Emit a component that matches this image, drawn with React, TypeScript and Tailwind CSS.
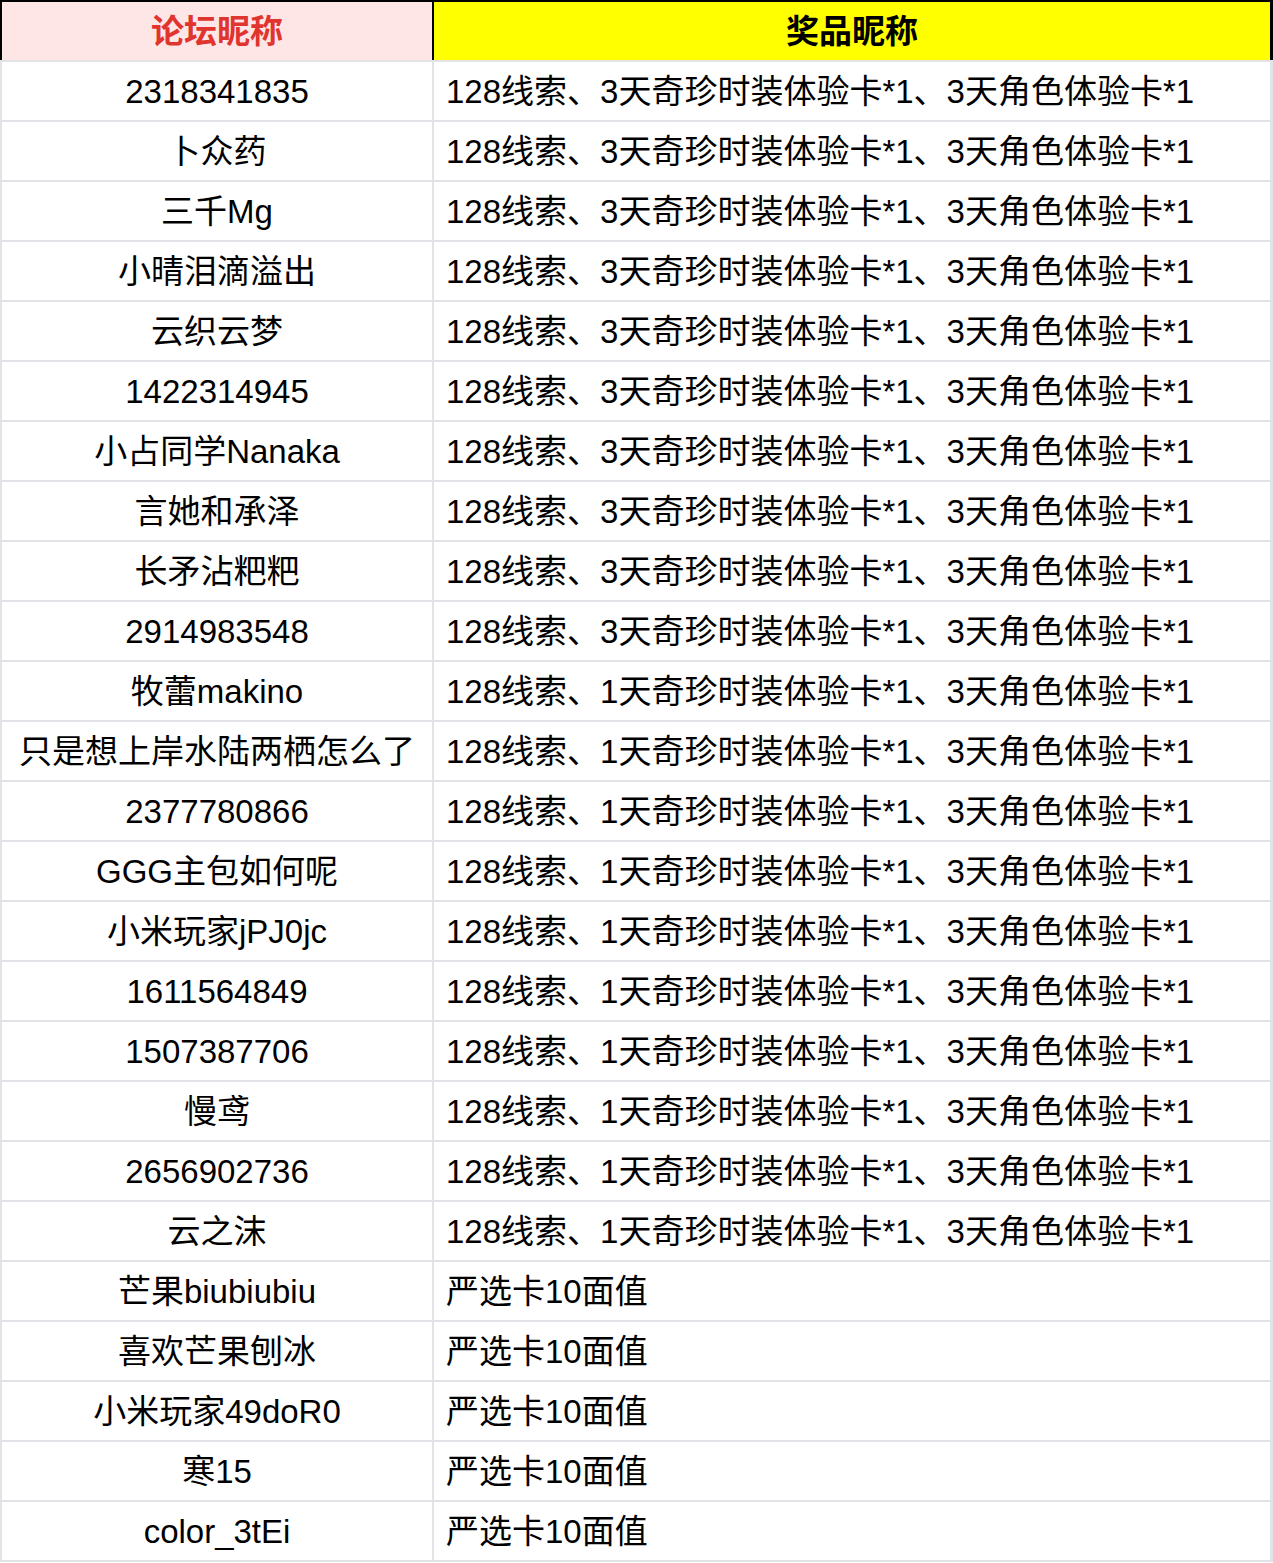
const FULL3 = "128线索、3天奇珍时装体验卡*1、3天角色体验卡*1";
const FULL1 = "128线索、1天奇珍时装体验卡*1、3天角色体验卡*1";
const CARD = "严选卡10面值";

const rows: [string, string][] = [
  ["2318341835", FULL3],
  ["卜众药", FULL3],
  ["三千Mg", FULL3],
  ["小晴泪滴溢出", FULL3],
  ["云织云梦", FULL3],
  ["1422314945", FULL3],
  ["小占同学Nanaka", FULL3],
  ["言她和承泽", FULL3],
  ["长矛沾粑粑", FULL3],
  ["2914983548", FULL3],
  ["牧蕾makino", FULL1],
  ["只是想上岸水陆两栖怎么了", FULL1],
  ["2377780866", FULL1],
  ["GGG主包如何呢", FULL1],
  ["小米玩家jPJ0jc", FULL1],
  ["1611564849", FULL1],
  ["1507387706", FULL1],
  ["慢鸢", FULL1],
  ["2656902736", FULL1],
  ["云之沫", FULL1],
  ["芒果biubiubiu", CARD],
  ["喜欢芒果刨冰", CARD],
  ["小米玩家49doR0", CARD],
  ["寒15", CARD],
  ["color_3tEi", CARD],
];

const font = "font-['Liberation_Sans','Noto_Sans_CJK_SC',sans-serif]";

export default function App() {
  return (
    <div className={`w-[1273px] bg-[#e2e3e7] pb-[2px] text-[33px] leading-none text-black ${font}`}>
      <div className="flex h-[60px] border-t-2 border-black bg-black">
        <div className="ml-[2px] flex w-[430px] items-center justify-center bg-[#ffe6e6] font-bold text-[#e0352f]">
          论坛昵称
        </div>
        <div className="ml-[2px] flex w-[836px] items-center justify-center bg-[#ffff00] font-bold">
          奖品昵称
        </div>
      </div>
      {rows.map(([name, prize], i) => (
        <div key={i} className="mt-[2px] flex h-[58px]">
          <div className="ml-[2px] flex w-[430px] items-center justify-center whitespace-nowrap bg-white">
            {name}
          </div>
          <div className="ml-[2px] flex w-[836px] items-center whitespace-nowrap bg-white pl-[12px]">
            {prize}
          </div>
        </div>
      ))}
    </div>
  );
}
